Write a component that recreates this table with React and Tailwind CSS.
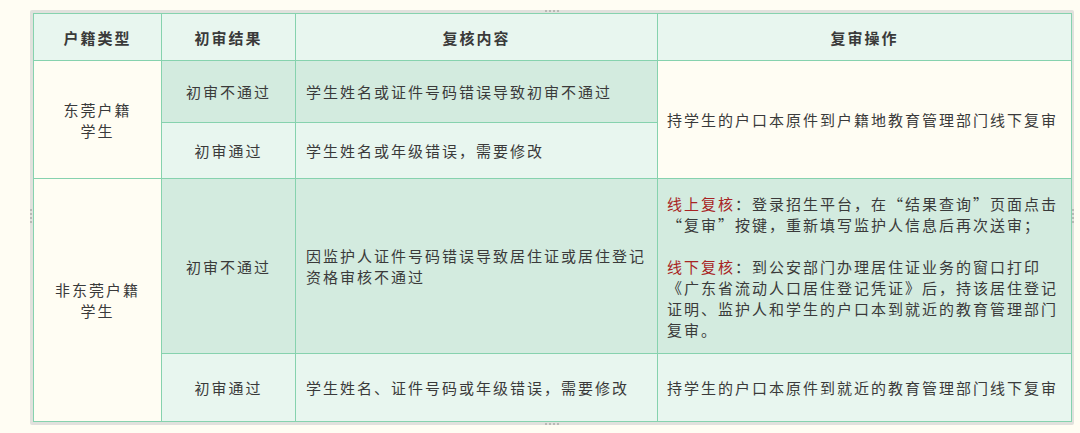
import React from "react";

const cellBase = "border border-[#86d2ae] text-[15px] tracking-[2px] leading-[21px] text-[#3a3a3a]";
const light = "bg-[#e8f6ef]";
const dark = "bg-[#d3ebdf]";
const cream = "bg-[#fffdf3]";

const Dots = ({ vertical }) => (
  <div className={vertical ? "flex flex-col gap-[2px]" : "flex gap-[2px]"}>
    {[0, 1, 2, 3].map((i) => (
      <span key={i} className="block w-[2px] h-[2px] bg-[#b9b9b6]" />
    ))}
  </div>
);

const App = () => {
  return (
    <div
      className="min-h-[433px] w-[1080px] bg-[#fffdf3] pt-[10px] pl-[30px]"
      style={{ fontFamily: '"Noto Sans CJK SC", "Noto Sans", sans-serif' }}
    >
      <div className="relative w-[1044px] border-[3px] border-[#e1e1dd] rounded-[2px]">
        {/* resize handles */}
        <div className="absolute top-[-3px] left-[512px]"><Dots /></div>
        <div className="absolute bottom-[-3px] left-[512px]"><Dots /></div>
        <div className="absolute left-[-3px] top-[196px]"><Dots vertical /></div>
        <div className="absolute right-[-3px] top-[196px]"><Dots vertical /></div>

        <table className="w-[1038px] table-fixed border-collapse">
          <colgroup>
            <col className="w-[128px]" />
            <col className="w-[134px]" />
            <col className="w-[362px]" />
            <col className="w-[414px]" />
          </colgroup>
          <thead>
            <tr className={`h-[47px] ${light}`}>
              {["户籍类型", "初审结果", "复核内容", "复审操作"].map((t) => (
                <th key={t} className={`${cellBase} font-bold text-[#1f1f1f] text-center`}>
                  {t}
                </th>
              ))}
            </tr>
          </thead>
          <tbody>
            <tr className="h-[62px]">
              <td rowSpan={2} className={`${cellBase} ${cream} text-center px-[10px]`}>
                东莞户籍<br />学生
              </td>
              <td className={`${cellBase} ${dark} text-center`}>初审不通过</td>
              <td className={`${cellBase} ${dark} pl-[10px] pr-[6px]`}>
                学生姓名或证件号码错误导致初审不通过
              </td>
              <td rowSpan={2} className={`${cellBase} ${cream} pl-[9px] pr-0`}>
                持学生的户口本原件到户籍地教育管理部门线下复审
              </td>
            </tr>
            <tr className="h-[56px]">
              <td className={`${cellBase} ${light} text-center`}>初审通过</td>
              <td className={`${cellBase} ${light} pl-[10px] pr-[6px]`}>
                学生姓名或年级错误，需要修改
              </td>
            </tr>
            <tr className="h-[175px]">
              <td rowSpan={2} className={`${cellBase} ${cream} text-center px-[10px]`}>
                非东莞户籍<br />学生
              </td>
              <td className={`${cellBase} ${dark} text-center`}>初审不通过</td>
              <td className={`${cellBase} ${dark} pl-[10px] pr-[2px]`}>
                因监护人证件号码错误导致居住证或居住登记资格审核不通过
              </td>
              <td className={`${cellBase} ${dark} pl-[9px] pr-0 leading-[20.4px]`}>
                <p className="whitespace-nowrap">
                  <span className="text-[#a82424]">线上复核</span>：登录招生平台，在“结果查询”页面点击
                  <br />
                  “复审”按键，重新填写监护人信息后再次送审；
                </p>
                <p>&nbsp;</p>
                <p>
                  <span className="text-[#a82424]">线下复核</span>：到公安部门办理居住证业务的窗口打印《广东省流动人口居住登记凭证》后，持该居住登记证明、监护人和学生的户口本到就近的教育管理部门复审。
                </p>
              </td>
            </tr>
            <tr className="h-[68px]">
              <td className={`${cellBase} ${light} text-center`}>初审通过</td>
              <td className={`${cellBase} ${light} pl-[10px] pr-[6px]`}>
                学生姓名、证件号码或年级错误，需要修改
              </td>
              <td className={`${cellBase} ${light} pl-[9px] pr-0`}>
                持学生的户口本原件到就近的教育管理部门线下复审
              </td>
            </tr>
          </tbody>
        </table>
      </div>
    </div>
  );
};

export default App;
